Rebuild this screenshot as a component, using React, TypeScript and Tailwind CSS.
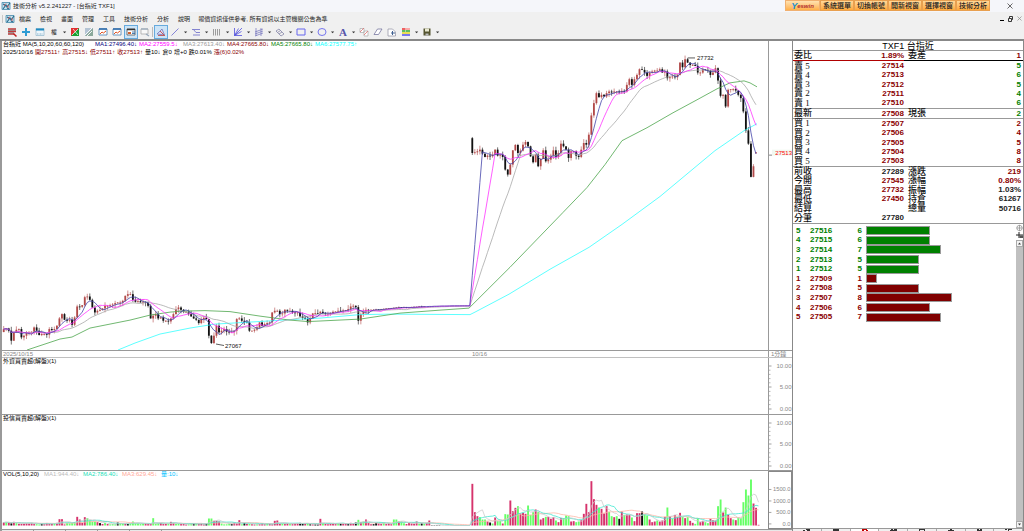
import type { ReactNode } from "react";

const UP = "#a52a2a";
const DOWN = "#111111";

// Bar spacing shared by the price and volume panes
const barX = (i: number) => 3.7 + i * 2.533;

// Closing levels, three units per pixel, measured down from `base`
const sessions = [
    {
        base: 840,
        levels: [
            150, 148, 155, 185, 160, 152, 150, 175, 170, 162, 160, 158, 145, 155, 168, 165, 165, 167, 150, 153,
            150, 140, 118, 105, 122, 125, 122, 137, 115, 82, 83, 78, 54, 52, 62, 85, 100, 95, 92, 88,
            80, 80, 78, 76, 72, 70, 70, 65, 50, 45, 45, 62, 68, 66, 70, 68, 70, 80, 118, 110,
            105, 118, 115, 125, 125, 127, 118, 105, 90, 85, 92, 98, 98, 105, 112, 118, 122, 132, 120, 116,
            120, 170, 192, 170, 140, 160, 155, 150, 158, 160, 158, 155, 120, 118, 125, 128, 130, 155, 155, 152,
            145, 130, 140, 135, 132, 130, 100, 95, 95, 105, 103, 92, 95, 95, 100, 101, 100, 112, 116, 120,
            130, 118, 103, 102, 103, 98, 102, 104, 104, 102, 98, 97, 95, 96, 94, 93, 90, 82, 80, 84,
            125, 105, 98, 92, 93, 92, 92, 91, 92, 90, 89, 88, 87, 87, 86, 85, 84, 85, 84, 86,
            85, 84, 83, 83, 82, 83, 82, 82, 81, 81, 81, 81, 81, 80, 81, 80, 80, 80, 80, 80,
            80, 80, 80, 80, 80,
        ],
    },
    {
        base: 360,
        levels: [
            100, 98, 95, 90, 102, 112, 108, 110, 105, 90, 108, 105, 112, 150, 165, 135, 92, 76, 100, 93,
            75, 67, 80, 110, 128, 105, 140, 118, 92, 125, 120, 108, 92, 112, 100, 72, 80, 90, 115, 95,
            95, 108, 112, 90, 70, 75, 45,
        ],
    },
    {
        base: 120,
        levels: [
            227, 190, 160, 172, 165, 170, 160, 155, 158, 155, 155, 157, 153, 155, 135, 118, 135, 118, 105, 88,
            90, 98, 108, 98, 95, 92, 92, 88, 98, 95, 115, 112, 110, 112, 105, 68, 82, 58, 68, 75,
            75, 78, 98, 98, 88, 90, 92, 105, 98, 85, 122, 168, 165, 200, 150, 148, 148, 152, 165, 175,
            215, 272, 312, 412, 380, 338,
        ],
    },
];

const OPEN_GAP_BAR = 185;

const closes = sessions.flatMap((s) => s.levels.map((l) => (l + s.base) / 3));

const ma60 =
    "27,351 60,340 72,338 90,329 105,326 130,321 150,316 170,313 182,312 205,311.5 230,312.5 260,317 290,321 308,322.5 360,320 400,314 440,311 469,309 510,268 563,213 587,188 605,165 622,141 647,128 673,113 697,100 717,89 730,83 744,81 750,83 757,87";
const ma120 =
    "118,351 135,344 160,335 190,329 215,325 250,323 300,320 320,319 360,315.5 390,315 470,315.5 475,313 509,295 550,270 589,248 622,225 660,197 715,151 744,131 757,124";

// r = up, g = down, k = unchanged
const day2Volume =
    "125r 40r 28r 25g 18g 18g 12r 9k 6g 24r 14g 14g 6r 34g 33g 75r 43r 53r 58g 36r 38r 35r 60g 32g 40g 48r 40g 18r 22r 26g 26r 20r 25r 15g 10r 22r 22g 30g 28g 12r 13r 10g 12g 16r 35r 65r 40r 133r 79r 62r 54g 50r 36r 58r 41g 28g 25r 28g 20k 42r 32g 33r 32r 24g 13r 37r 37r 42k 34g 30g 18r 10r 12r 15g 12r 15r 26r 54g 28r 20g 31r 26r 38r 26g 22r 25g 14r 8r 5g 22g 10r 14r 10g 7g 20r 16r 15r 58g 78g 39r 54g 32r 22r 18g 16r 24g 22g 70g 108g 90g 138g 66r 53r 2r"
        .split(" ")
        .map((v) => ({ h: parseInt(v, 10), c: v.slice(-1) }));

const day1Spikes: Record<number, string> = {
    0: "9r", 1: "10g", 2: "9r", 4: "11r", 22: "19r", 23: "19r", 27: "8g", 28: "10g", 29: "26r", 30: "18r", 31: "8r", 32: "25r",
    33: "22g", 34: "15g", 35: "12g", 36: "12g", 37: "10r", 45: "9k", 51: "12g", 59: "22g", 66: "11r", 67: "8r",
    81: "21g", 82: "21g", 83: "14r", 84: "14r", 85: "12r", 93: "16r", 107: "14r", 108: "15r", 125: "20r", 137: "8r",
    139: "9k", 140: "17g", 141: "10r", 142: "12g", 143: "18r", 147: "8k", 150: "9g", 154: "18g", 155: "18g",
    156: "12r", 157: "12g", 163: "12r", 168: "15r",
};

const noise = (i: number) => {
    const n = Math.sin(i * 91.7 + 3.1) * 4371.3;
    return n - Math.floor(n);
};

const day1Volume = Array.from({ length: OPEN_GAP_BAR }, (_, i) => {
    const spike = day1Spikes[i];
    if (spike) return { h: parseInt(spike, 10), c: spike.slice(-1) };
    if (i > 168) return { h: i < 173 ? 1 : 0, c: "k" };
    const n = noise(i);
    const c = n > 0.88 ? "k" : n > 0.55 || (i > 37 && i < 56 && n > 0.25) ? "g" : "r";
    return { h: 3 + noise(i + 500) * 5, c };
});

const volumes = [...day1Volume, ...day2Volume];
const volumeFill: Record<string, string> = { r: "#d6336c", g: "#66ff66", k: "#111111" };

function average(values: number[], span: number) {
    return values
        .map((_, i) => {
            const part = values.slice(Math.max(0, i - span + 1), i + 1);
            return `${barX(i).toFixed(1)},${(part.reduce((a, b) => a + b, 0) / part.length).toFixed(1)}`;
        })
        .join(" ");
}

const volumeLevels = volumes.map((v) => 525.5 - v.h / 3);

function Line({ points, color }: { points: string; color: string }) {
    return <polyline points={points} fill="none" stroke={color} strokeWidth="0.8" />;
}

function openLevel(i: number) {
    if (i === 0) return 333;
    if (i === OPEN_GAP_BAR) return 138.5;
    // The newest bar has only just opened
    if (i === closes.length - 1) return closes[i] + 1;
    return closes[i - 1];
}

function PriceChart() {
    return (
        <svg viewBox="2 41 766 310" preserveAspectRatio="none" className="block h-full w-full">
            {closes.map((close, i) => {
                const open = openLevel(i);
                const flat = i > 145 && i < OPEN_GAP_BAR;
                const newest = i === closes.length - 1;
                const reach = flat ? 0.8 : newest ? 0 : 4;
                const top = Math.min(open, close);
                const bottom = Math.max(open, close);
                const color = close > open ? DOWN : UP;
                const x = barX(i);
                if (i > 166 && flat) return null;
                return (
                    <g key={i} opacity={close > open ? 1 : 0.85}>
                        <line
                            x1={x}
                            x2={x}
                            y1={top - noise(i) * reach}
                            y2={bottom + noise(i + 77) * reach}
                            stroke={color}
                            strokeWidth="0.6"
                        />
                        <rect x={x - 0.9} y={top} width="1.8" height={Math.max(0.8, bottom - top)} fill={color} />
                    </g>
                );
            })}
            <Line points={ma120} color="#33ffff" />
            <Line points={ma60} color="#4ca64c" />
            <Line points={average(closes, 20)} color="#a8a8a8" />
            <Line points={average(closes, 10)} color="#ff33ff" />
            <Line points={average(closes, 5)} color="#4444aa" />
            <path d="M688 58 L695 58 M216 345 L224 346.500" stroke="#333" strokeWidth="0.8" />
            <g fontFamily="Liberation Sans" fontSize="6" fill="#111">
                <text x="697" y="60">27732</text>
                <text x="225" y="349">27067</text>
            </g>
        </svg>
    );
}

function VolumeChart() {
    return (
        <svg viewBox="2 471 766 58" preserveAspectRatio="none" className="block h-full w-full">
            {volumes.map((v, i) => (
                <rect key={i} x={barX(i) - 0.9} y={525.5 - v.h / 3} width="1.9" height={v.h / 3} fill={volumeFill[v.c]} />
            ))}
            <Line points={average(volumeLevels, 20)} color="#ffb8a8" />
            <Line points={average(volumeLevels, 10)} color="#40e8d0" />
            <Line points={average(volumeLevels, 5)} color="#cccccc" />
        </svg>
    );
}

type Tick = { y: number; label: string };

function Axis({ height, ticks, minor = 0 }: { height: number; ticks: Tick[]; minor?: number }) {
    return (
        <svg viewBox={`0 0 23 ${height}`} className="block h-full w-full">
            {ticks.map((t, i) => (
                <g key={t.label}>
                    <path d={`M0 ${t.y} h2.500`} stroke="#888" strokeWidth="0.8" />
                    {i > 0 &&
                        Array.from({ length: minor }, (_, m) => (
                            <path
                                key={m}
                                d={`M0 ${t.y - ((m + 1) * (t.y - ticks[i - 1].y)) / (minor + 1)} h1.500`}
                                stroke="#999"
                                strokeWidth="0.7"
                            />
                        ))}
                    <text x="22.500" y={t.y + 2} textAnchor="end" fontFamily="Liberation Sans" fontSize="6" fill="#888">
                        {t.label}
                    </text>
                </g>
            ))}
        </svg>
    );
}

interface PaneProps {
    className: string;
    legend: ReactNode;
    axis: ReactNode;
    axisClass?: string;
    children?: ReactNode;
}

function Pane({ className, legend, axis, axisClass = "border-l border-[#999]", children }: PaneProps) {
    return (
        <section className={`flex min-h-0 ${className}`}>
            <div className="relative min-w-0 flex-1">
                {children}
                <div className="absolute top-0 left-0 whitespace-nowrap text-[6px] leading-[7px]">{legend}</div>
            </div>
            <div className={`w-6 shrink-0 ${axisClass}`}>{axis}</div>
        </section>
    );
}

const maLegend = [
    { text: "MA1:27496.40↓", cls: "text-[#000080]" },
    { text: "MA2:27559.5↓", cls: "text-[#ff00ff]" },
    { text: "MA3:27613.40↓", cls: "text-[#999999]" },
    { text: "MA4:27665.80↓", cls: "text-[#8b0000]" },
    { text: "MA5:27665.80↓", cls: "text-[#008000]" },
    { text: "MA6:27577.75↑", cls: "text-[#00ffff]" },
];

const priceLegend = [
    { text: "2025/10/16", cls: "text-black" },
    { text: "開27511↑", cls: "text-[#8b0000]" },
    { text: "高27515↓", cls: "text-[#8b0000]" },
    { text: "低27511↑", cls: "text-[#8b0000]" },
    { text: "收27513↑", cls: "text-[#8b0000]" },
    { text: "量10↓", cls: "text-black" },
    { text: "倉0", cls: "text-black" },
    { text: "增+0", cls: "text-black" },
    { text: "跌0.01%", cls: "text-black" },
    { text: "漲(6)0.02%", cls: "text-[#8b0000]" },
];

const volumeLegend = [
    { text: "MA1:944.40↓", cls: "text-[#bbbbbb]" },
    { text: "MA2:786.40↓", cls: "text-[#20e0b8]" },
    { text: "MA3:629.45↓", cls: "text-[#ffa898]" },
    { text: "量:10↓", cls: "text-[#00bfff]" },
];

const icons: Record<string, ReactNode> = {
    list: (
        <>
            <path d="M3 4h8M3 6.500h8M3 9h6" stroke="#c03838" strokeWidth="1.700" />
            <path d="M3 5.300h8M3 7.800h6" stroke="#4a4a4a" strokeWidth="0.600" />
            <path d="m8.500 8.500 3 3" stroke="#c02020" strokeWidth="1.500" />
        </>
    ),
    plus: <path d="M7 3v8M3 7h8" stroke="#2d9bd3" strokeWidth="2" />,
    window: (
        <>
            <path d="M3 3.500h8v7H3z" fill="#eef6fb" stroke="#8fb6cc" strokeWidth="0.700" />
            <path d="M3 4.500h8" stroke="#1f8ac0" strokeWidth="2" />
            <path d="M4 9h6" stroke="#8fb6cc" strokeDasharray="1 0.500" />
        </>
    ),
    redGreen: (
        <>
            <path d="M3 3h8v8H3z" fill="#e03030" />
            <path d="M11 3v8H3z" fill="#18a030" />
            <path d="m4 10 6-6M5 4l5 6" stroke="#fff" strokeWidth="0.700" />
        </>
    ),
    grayGreen: (
        <>
            <path d="M3 3h8v8H3z" fill="#b4c4d4" />
            <path d="M11 3v8H3z" fill="#8aa89a" />
            <path d="m3 10 7-7M5 11l5-5" stroke="#fff" strokeWidth="0.900" />
        </>
    ),
    chart: (
        <>
            <path d="M3 4h8v6H3z" fill="#fff" stroke="#4a82b4" strokeWidth="0.800" />
            <path d="M3 4h8" stroke="#2868a8" strokeWidth="1.500" />
            <path d="m4 9 2-2 1.500 1L10 6" fill="none" stroke="#e05020" strokeWidth="1" />
        </>
    ),
    panel: (
        <>
            <path d="M3 4h8v6H3z" fill="#fff" stroke="#555" strokeWidth="0.800" />
            <path d="M3 4.500h8" stroke="#333" strokeWidth="1.500" />
            <path d="M4 7h3v2H4z" fill="#d06030" />
            <path d="M8 7h3M8 8.500h3" stroke="#2060a0" strokeWidth="0.800" />
        </>
    ),
    grayWindow: (
        <>
            <path d="M3 4h7v5H3z" fill="#f8f8f8" stroke="#aaa" strokeWidth="0.800" />
            <path d="M3 4h7" stroke="#9ab" strokeWidth="1.300" />
            <path d="m8 9 3 2" stroke="#9ab" strokeWidth="1.300" />
        </>
    ),
    draw: (
        <>
            <path d="m3 9 5-5 2.500 6z" fill="#d8d8f0" stroke="#6868b0" strokeWidth="0.700" />
            <path d="M4 10.500h7M6 6l4 4" stroke="#c05050" strokeWidth="0.900" />
        </>
    ),
    line: <path d="m3.500 10.500 7-7" stroke="#5555cc" strokeWidth="0.700" />,
    trend: <path d="M3 4.500h8M4 10h7M4.500 4.500 7 7.500h4" fill="none" stroke="#7777cc" strokeWidth="0.900" />,
    vertical: <path d="M3.500 4v6.500M5.500 4v6.500M7.500 4v6.500M9.500 4v6.500" stroke="#777" strokeWidth="0.700" />,
    fan: <path d="M3.500 3v7.500H11M3.500 10.500 11 3M3.500 10.500l4-7M3.500 10.500l7-4" fill="none" stroke="#5050dd" strokeWidth="0.800" />,
    channel: <path d="M4 3v8M9 3v8M3 7l8-3M3 9l8-3M3 11l8-3" stroke="#7070bb" strokeWidth="0.700" />,
    speed: <path d="m3 6 3-2 5 5-3 2zM4.500 7.500l3-2M6 9l3-2" fill="none" stroke="#8888aa" strokeWidth="0.800" />,
    rect: <path d="M3 4h8v6H3z" fill="none" stroke="#6666ee" />,
    ellipse: <ellipse cx="7" cy="7" rx="4" ry="3.500" fill="none" stroke="#7777ee" />,
    copy: (
        <>
            <path d="M3 3.500h4v4H3zM7 6h4v5H7z" fill="#fff" stroke="#aaa" strokeWidth="0.700" />
            <path d="m3 7 4-4M7 10l4-4" stroke="#e07070" strokeWidth="0.800" />
        </>
    ),
    eraser: <path d="M3 9.500 6.500 4H11L7.500 9.500z" fill="#fff" stroke="#7777a0" strokeWidth="0.800" />,
    restore: (
        <>
            <path d="M3 4h4.500l3 3v4H3z" fill="#fff" stroke="#99a" strokeWidth="0.800" />
            <path d="M6 8h4M7.500 6v4" stroke="#406090" />
        </>
    ),
    palette: (
        <>
            <path d="M3 4h3.500" stroke="#ee3030" strokeWidth="1.500" />
            <path d="M7 4h4" stroke="#ff9090" strokeWidth="1.500" />
            <path d="M3 6h3.500M7 6h4" stroke="#30aa30" strokeWidth="1.500" />
            <path d="M3 8h8" stroke="#e8d820" strokeWidth="1.500" />
            <path d="M3 10h8" stroke="#5050ee" strokeWidth="1.500" />
        </>
    ),
    save: (
        <>
            <path d="M3.500 3.500h7v7h-7z" fill="#555530" />
            <path d="M5 3.500h4v3H5z" fill="#e8e8d0" />
            <path d="M5.500 8.500h3v2h-3z" fill="#bbb" />
        </>
    ),
};

type Tool = { icon?: string; label?: string; title: string; drop?: boolean; active?: boolean; labelClass?: string };

const leftTools: Tool[] = [
    { icon: "list", title: "清單" },
    { icon: "plus", title: "新增" },
    { icon: "window", title: "視窗" },
];

const viewTools: Tool[] = [
    { icon: "redGreen", title: "紅綠" },
    { icon: "grayGreen", title: "灰階" },
    { icon: "chart", title: "圖表" },
    { icon: "chart", title: "走勢" },
    { icon: "panel", title: "面板", active: true },
    { icon: "grayWindow", title: "隱藏" },
];

const drawTools: Tool[] = [
    { icon: "draw", title: "繪圖", active: true },
    { icon: "line", title: "直線", drop: true },
    { icon: "trend", title: "趨勢", drop: true },
    { icon: "vertical", title: "週期", drop: true },
    { icon: "fan", title: "扇形", drop: true },
    { icon: "channel", title: "通道", drop: true },
    { icon: "speed", title: "速度", drop: true },
    { icon: "rect", title: "矩形", drop: true },
    { icon: "ellipse", title: "橢圓", drop: true },
    { label: "A", title: "文字", drop: true, labelClass: "font-['Liberation_Serif'] text-[11px] font-bold text-[#5555aa]" },
    { icon: "copy", title: "複製" },
    { icon: "eraser", title: "清除" },
    { icon: "restore", title: "還原" },
    { icon: "palette", title: "顏色", drop: true },
    { icon: "save", title: "存檔", drop: true },
];

function ToolButton({ tool }: { tool: Tool }) {
    return (
        <>
            <button
                type="button"
                aria-label={tool.title}
                className={`flex h-[14px] w-[14px] shrink-0 items-center justify-center ${
                    tool.active ? "border border-[#66aadd] bg-[#cce4f7]" : ""
                }`}
            >
                {tool.icon ? (
                    <svg viewBox="1 1 12 12" className="h-3 w-3 shrink-0">{icons[tool.icon]}</svg>
                ) : (
                    <span className={tool.labelClass}>{tool.label}</span>
                )}
            </button>
            {tool.drop && (
                <svg viewBox="0 0 7 14" className="h-[14px] w-[7px] shrink-0">
                    <path d="M2 6.500h3.200L3.600 8.300z" fill="#333" />
                </svg>
            )}
        </>
    );
}

function AppIcon() {
    return (
        <svg viewBox="0 0 10 10" className="h-[10px] w-[10px] shrink-0">
            <path d="M1 1.500h8v7H1z" fill="#c4e2ef" stroke="#4488aa" strokeWidth="0.800" />
            <path d="m2 8 3-4 1 2 3-4M2 3l2 1M6 7l2 1" fill="none" stroke="#226688" strokeWidth="1.100" />
            <path d="M5 2.500 3 5M7 4v3" stroke="#d05555" strokeWidth="0.900" />
        </svg>
    );
}

const menus = ["檔案", "檢視", "畫面", "管理", "工具", "技術分析", "分析", "說明"];
const quickLinks = ["系統選單", "切換帳號", "開新視窗", "選擇視窗", "技術分析"];

function Header() {
    return (
        <header className="shrink-0 whitespace-nowrap">
            <div className="flex h-3 items-center bg-[#f5f6fa] pl-px text-[6px] leading-[10px] text-[#222]">
                <AppIcon />
                <h1 className="ml-0.5">技術分析 v5.2.241227 - [台指近 TXF1]</h1>
                <nav className="ml-auto flex h-[11px] self-start bg-[#e89840]">
                    <button type="button" className="flex w-[35px] items-center justify-center border border-[#f0b070] bg-gradient-to-b from-[#ffe2b0] to-[#ffb048] font-bold italic">
                        <span className="text-[9px] text-[#2090d0]">Y</span>
                        <span className="text-[6px] text-[#b03030]">eswin</span>
                    </button>
                    {quickLinks.map((link) => (
                        <button
                            key={link}
                            type="button"
                            className="w-[34px] border border-[#e8a050] bg-gradient-to-b from-[#ffd898] to-[#ffa838] text-[7px] leading-[9px] font-medium text-[#222]"
                        >
                            {link}
                        </button>
                    ))}
                </nav>
                <button type="button" aria-label="關閉" className="ml-[17px] mr-[11px]">
                    <svg viewBox="0 0 6 6" className="h-1.5 w-1.5">
                        <path d="m0.500 0.500 5 5M5.500 0.500l-5 5" stroke="#444" strokeWidth="0.800" />
                    </svg>
                </button>
            </div>
            <div className="flex h-[13px] items-center pl-0.5 text-[6px] leading-[8px] text-[#222]">
                <span className="mr-0.5 h-2 w-px bg-[#c8c8c8]" />
                <AppIcon />
                <nav className="ml-1 flex gap-[9px]">
                    {menus.map((menu) => (
                        <button key={menu} type="button">{menu}</button>
                    ))}
                </nav>
                <p className="ml-2">報價資訊僅供參考, 所有資訊以主管機關公告為準</p>
                <div className="mr-0.5 ml-auto flex items-center gap-1">
                    <button type="button" aria-label="縮小" className="mt-1 h-px w-1 bg-black" />
                    <button type="button" aria-label="還原視窗">
                        <svg viewBox="0 0 5 6" className="h-1.5 w-[5px]">
                            <path d="M0.500 2.500h3v3h-3zM1.500 2V0.500h3v3H4" fill="none" stroke="#222" strokeWidth="0.900" />
                        </svg>
                    </button>
                    <button type="button" aria-label="關閉圖表">
                        <svg viewBox="0 0 5 5" className="h-[5px] w-[5px]">
                            <path d="m0.500 0.500 4 4M4.500 0.500l-4 4" stroke="#888" strokeWidth="0.700" />
                        </svg>
                    </button>
                </div>
            </div>
            <div className="flex h-[14px] items-center pl-[5px]">
                {leftTools.map((t) => (
                    <ToolButton key={t.title} tool={t} />
                ))}
                <ToolButton tool={{ label: "權", title: "權值", drop: true, labelClass: "text-[6px] text-[#222]" }} />
                {viewTools.map((t) => (
                    <ToolButton key={t.title} tool={t} />
                ))}
                <span className="mr-px h-2.5 w-px bg-[#bbb]" />
                {drawTools.map((t) => (
                    <ToolButton key={t.title} tool={t} />
                ))}
            </div>
        </header>
    );
}

function Legend({ items, itemClass }: { items: { text: string; cls: string }[]; itemClass: string }) {
    return (
        <>
            {items.map((item) => (
                <span key={item.text} className={`inline-block ${itemClass} ${item.cls}`}>{item.text}</span>
            ))}
        </>
    );
}

function Charts() {
    return (
        <div className="flex min-w-0 flex-1 flex-col border-l-2 border-[#999]">
            <Pane
                className="flex-1"
                legend={
                    <div className="pl-px">
                        <div className="mb-px flex">
                            <span className="w-[92px]">台指近 MA(5,10,20,60,60,120)</span>
                            <Legend items={maLegend} itemClass="w-11" />
                        </div>
                        <div className="flex gap-0.5">
                            <Legend items={priceLegend} itemClass="" />
                        </div>
                    </div>
                }
                axis={
                    <svg viewBox="0 0 23 310" className="block h-full w-full">
                        <path d="M0 114.500h3" stroke="#888" />
                        <path d="M3 109h20v6H3z" fill="#f1f8f1" />
                        <text x="23" y="114" textAnchor="end" fontFamily="Liberation Sans" fontSize="6" fill="#ff0000">27513</text>
                    </svg>
                }
            >
                <PriceChart />
            </Pane>
            <div className="flex h-2 border-t border-b border-t-[#999] border-b-[#c0c0c0] text-[6px] leading-[6px] text-[#888]">
                <span className="w-[470px] pl-px">2025/10/15</span>
                <span>10/16</span>
                <span className="ml-auto w-6 border-l border-[#999] pl-0.5 whitespace-nowrap">1分鐘</span>
            </div>
            <Pane
                className="h-14"
                legend={<span className="pl-px">外資買賣超(解盤)(1)</span>}
                axis={<Axis height={56} minor={4} ticks={[{ y: 8, label: "10.00" }, { y: 29, label: "5.00" }, { y: 51, label: "0.00" }]} />}
            />
            <Pane
                className="h-14 border-t border-[#999]"
                legend={<span className="pl-px">投信買賣超(解盤)(1)</span>}
                axis={<Axis height={55} minor={4} ticks={[{ y: 8, label: "10.00" }, { y: 29, label: "5.00" }, { y: 51, label: "0.00" }]} />}
            />
            <Pane
                className="h-[59px] border-t border-[#999]"
                legend={
                    <div className="flex pl-px">
                        <span className="w-[41px]">VOL(5,10,20)</span>
                        <Legend items={volumeLegend} itemClass="w-[39px]" />
                    </div>
                }
                axisClass="border border-[#888]"
                axis={
                    <Axis
                        height={56}
                        ticks={[{ y: 17, label: "1500.0" }, { y: 29, label: "1000.0" }, { y: 41, label: "500.0" }, { y: 53, label: "0.0" }]}
                    />
                }
            >
                <VolumeChart />
            </Pane>
            <div className="flex h-0.5 border-t border-[#999] bg-[#e8e8e8]">
                {[1, 2, 3, 4, 5].map((n) => (
                    <span key={n} className="w-8 border-r border-[#999]" />
                ))}
            </div>
        </div>
    );
}

const R = "text-[#8b0000]";
const G = "text-[#008000]";
const K = "text-[#222]";

type QuoteRow = { label: string; value?: string; color?: string; label2?: string; value2?: string; color2?: string; line?: string };

const quotes: QuoteRow[] = [
    { label: "委比", value: "1.89%", color: R, label2: "委差", value2: "1", color2: R, line: "split" },
    { label: "賣 5", value: "27514", color: R, value2: "5", color2: G },
    { label: "賣 4", value: "27513", color: R, value2: "6", color2: G },
    { label: "賣 3", value: "27512", color: R, value2: "5", color2: G },
    { label: "賣 2", value: "27511", color: R, value2: "4", color2: G },
    { label: "賣 1", value: "27510", color: R, value2: "6", color2: G, line: "thin" },
    { label: "最新", value: "27508", color: R, label2: "現張", value2: "2", color2: G, line: "thin" },
    { label: "買 1", value: "27507", color: R, value2: "2", color2: R },
    { label: "買 2", value: "27506", color: R, value2: "4", color2: R },
    { label: "買 3", value: "27505", color: R, value2: "5", color2: R },
    { label: "買 4", value: "27504", color: R, value2: "8", color2: R },
    { label: "買 5", value: "27503", color: R, value2: "8", color2: R, line: "thin" },
    { label: "前收", value: "27289", color: K, label2: "漲跌", value2: "219", color2: R },
    { label: "今開", value: "27545", color: R, label2: "漲幅", value2: "0.80%", color2: R },
    { label: "最高", value: "27732", color: R, label2: "振幅", value2: "1.03%", color2: K },
    { label: "最低", value: "27450", color: R, label2: "持倉", value2: "61267", color2: K },
    { label: "結算", label2: "總量", value2: "50716", color2: K },
    { label: "分筆", value: "27780", color: K, line: "thin" },
];

const depth = [
    { level: 5, price: 27516, qty: 6, side: "sell" },
    { level: 4, price: 27515, qty: 6, side: "sell" },
    { level: 3, price: 27514, qty: 7, side: "sell" },
    { level: 2, price: 27513, qty: 5, side: "sell" },
    { level: 1, price: 27512, qty: 5, side: "sell" },
    { level: 1, price: 27509, qty: 1, side: "buy" },
    { level: 2, price: 27508, qty: 5, side: "buy" },
    { level: 3, price: 27507, qty: 8, side: "buy" },
    { level: 4, price: 27506, qty: 6, side: "buy" },
    { level: 5, price: 27505, qty: 7, side: "buy" },
];

// Upper edges of the tab captions peeking over the window's bottom edge
const tabMarks = [
    "M0 1.500h2M3 0.500h4M4 1.500h3",
    "M1 0.500h6M1 1.500h6",
    "M1 0.500h5M1 1.500h2M5 1.500h2",
    "M1 0.500h2M4 0.500h3M0 1.500h7",
    "M1 0.500h6M1 1.500h1M6 1.500h1",
    "M3 0.500h2M1 1.500h6",
    "M1 0.500h2M4 0.500h2M1 1.500h5",
    "M0 0.500h2M3 0.500h4M3 1.500h1",
];

function lineClass(line: string | undefined, half: "left" | "right") {
    if (line === "thin") return "border-b border-[#999]";
    if (line === "split") return half === "left" ? "border-b border-[#b00000]" : "border-b border-black";
    return "";
}

function QuotePanel() {
    const labelCell = "p-0 pl-px text-left font-['Liberation_Serif','Noto_Sans_CJK_TC',serif] text-[9px] leading-[8px] font-medium text-[#111]";
    return (
        <aside className="flex w-[232px] shrink-0 flex-col border-r border-l border-[#888]">
            <h2 className="h-[10px] border-b border-[#999] text-center text-[9px] leading-[10px]">TXF1 台指近</h2>
            <table className="h-[173px] w-full table-fixed border-separate border-spacing-0 text-[8px] leading-[8px] font-bold">
                <tbody>
                    {quotes.map((q) => (
                        <tr key={q.label}>
                            <th scope="row" className={`w-[45px] pb-px ${labelCell} ${lineClass(q.line, "left")}`}>{q.label}</th>
                            <td className={`w-[66px] p-0 text-right ${q.color ?? ""} ${lineClass(q.line, "left")}`}>{q.value}</td>
                            <td className={`w-[60px] pb-px ${labelCell} ${lineClass(q.line, "right")}`}>
                                <span className="pl-[3px]">{q.label2}</span>
                            </td>
                            <td className={`p-0 pr-0.5 text-right ${q.color2 ?? ""} ${lineClass(q.line, "right")}`}>{q.value2}</td>
                        </tr>
                    ))}
                </tbody>
            </table>
            <div className="flex min-h-0 flex-1">
                <div className="flex-1">
                    <table className="mt-[2px] h-24 w-full table-fixed border-separate border-spacing-0 text-[8px] leading-[8px] font-bold">
                        <tbody>
                            {depth.map((d) => (
                                <tr key={d.price} className={d.side === "sell" ? G : R}>
                                    <td className="w-[17px] p-0 pl-[3px]">{d.level}</td>
                                    <td className="w-[40px] p-0">{d.price}</td>
                                    <td className="w-[12px] p-0 text-right">{d.qty}</td>
                                    <td className="p-0 pl-1">
                                        <div
                                            className={`h-[9px] border border-[#999] ${d.side === "sell" ? "bg-[#008000]" : "bg-[#800000]"}`}
                                            style={{ width: `${(d.qty / 8) * 57}%` }}
                                        />
                                    </td>
                                </tr>
                            ))}
                        </tbody>
                    </table>
                </div>
                <div className="flex w-[7px] flex-col items-center">
                    <svg viewBox="0 0 7 16" className="h-4 w-[7px] shrink-0">
                        <circle cx="3.500" cy="4" r="2.700" fill="none" stroke="#888" strokeWidth="0.700" />
                        <path d="M3.500 1v6M0.500 4h6" stroke="#888" strokeWidth="0.700" />
                        <path d="M0 11h7M3 8v6" stroke="#222" />
                        <path d="M3.500 11.500H7V14H3.500z" fill="#555" />
                    </svg>
                    <div className="flex w-full flex-1 flex-col justify-between bg-[#c0c0c0]">
                        <button type="button" aria-label="向上" className="h-[7px] border border-[#aaa] bg-[#f4f4f4]">
                            <svg viewBox="0 0 5 5" className="h-[5px] w-[5px]"><path d="M1 3.500h3L2.500 1.500z" fill="#444" /></svg>
                        </button>
                        <button type="button" aria-label="向下" className="h-[7px] border border-[#aaa] bg-[#f4f4f4]">
                            <svg viewBox="0 0 5 5" className="h-[5px] w-[5px]"><path d="M1 1.500h3L2.500 3.500z" fill="#444" /></svg>
                        </button>
                    </div>
                </div>
            </div>
            <div className="flex h-[3px] border-t border-[#999] bg-[#f0f0f0]">
                {tabMarks.map((mark, i) => (
                    <button
                        key={mark}
                        type="button"
                        aria-label={`分頁 ${i + 1}`}
                        className={`flex flex-1 justify-center border-r border-[#aaa] ${i === 2 ? "bg-white text-[#c00000]" : "text-[#333]"}`}
                    >
                        <svg viewBox="0 0 7 2" className="h-0.5 w-[7px]">
                            <path d={mark} stroke="currentColor" />
                        </svg>
                    </button>
                ))}
            </div>
        </aside>
    );
}

export default function App() {
    return (
        <div className="flex h-screen flex-col overflow-hidden bg-[#f0f0f0] font-['Liberation_Sans','Noto_Sans_CJK_TC',sans-serif] text-black">
            <Header />
            <main className="flex min-h-0 flex-1 border-t-2 border-[#888] bg-white">
                <Charts />
                <QuotePanel />
            </main>
        </div>
    );
}
